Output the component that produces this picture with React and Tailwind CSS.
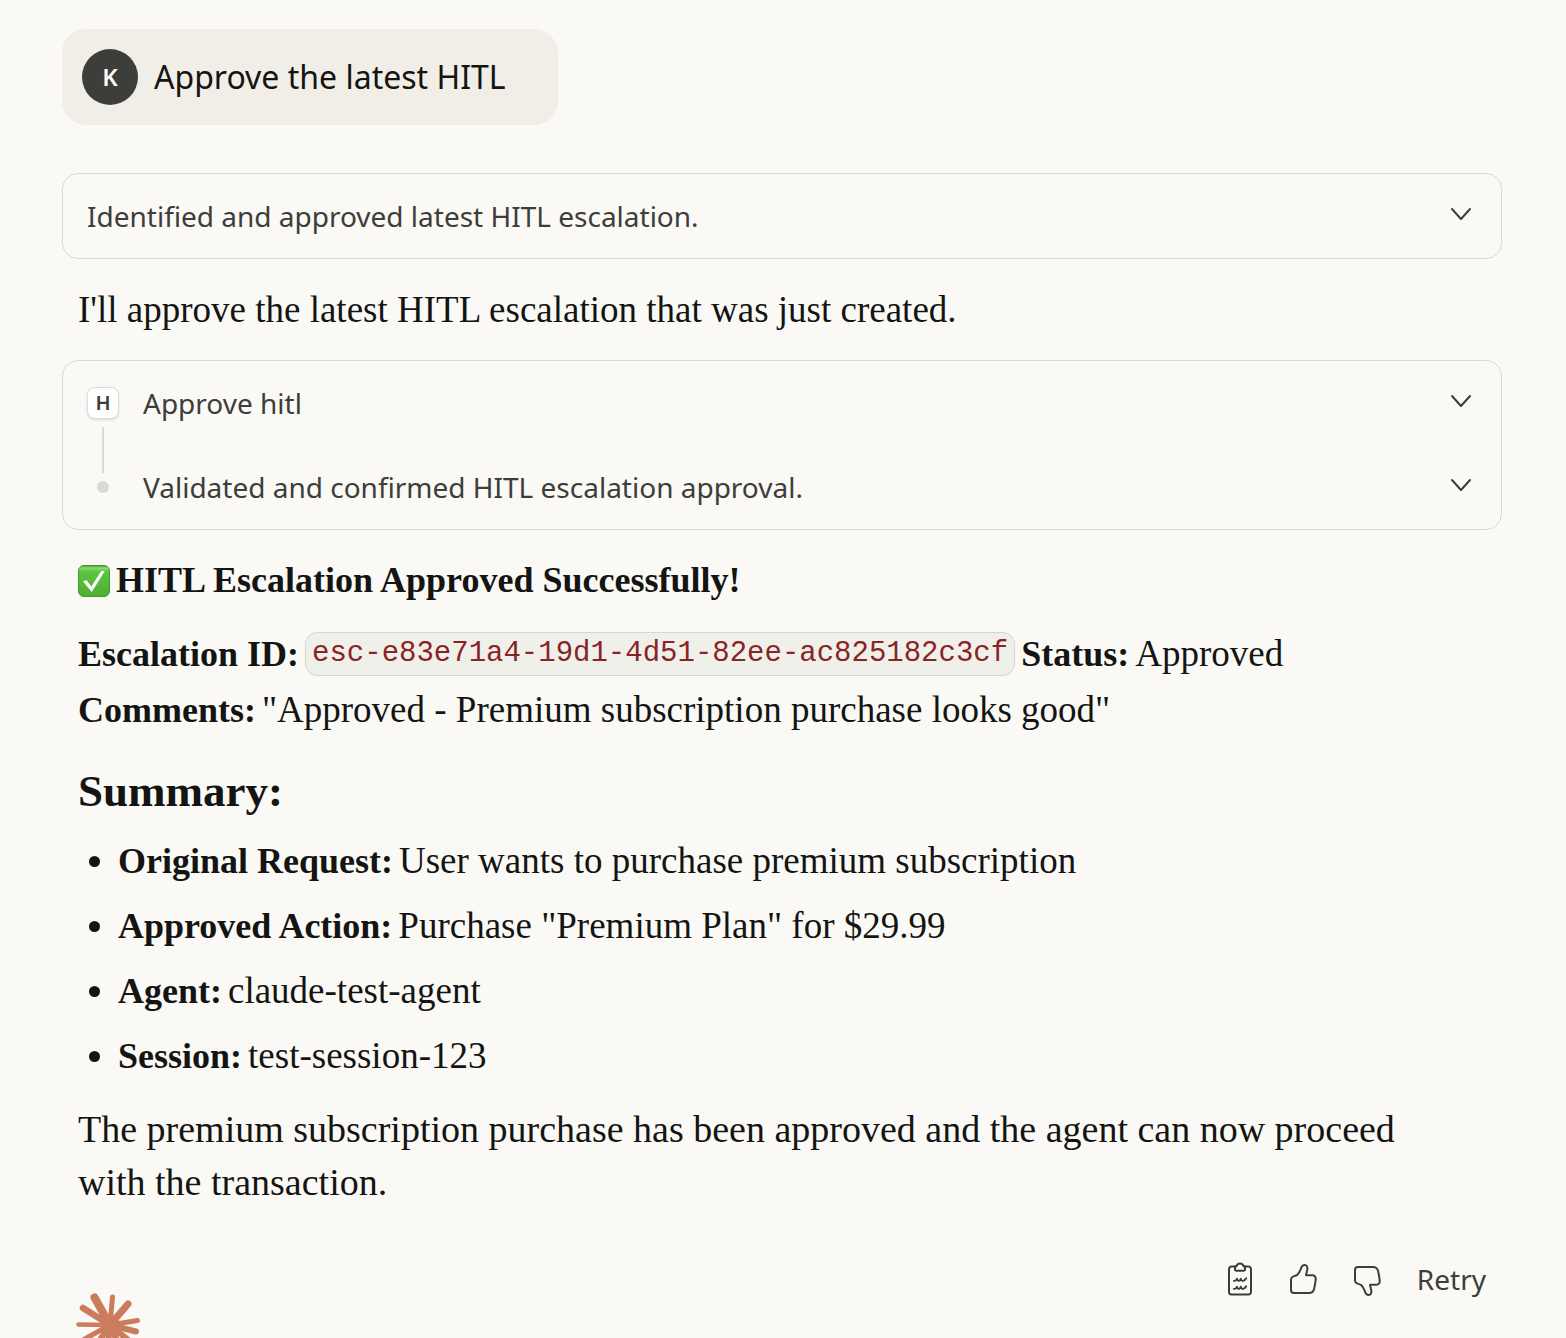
const SANS = "font-['Noto_Sans','Open_Sans',sans-serif]";

function Chevron() {
  return (
    <svg className="h-6 w-6 shrink-0 text-[#3d3d3a]" viewBox="0 0 24 24" fill="none" stroke="currentColor" strokeWidth="2" strokeLinecap="round" strokeLinejoin="round" aria-hidden="true">
      <path d="M3 5l9 10 9-10" />
    </svg>
  );
}

function Check() {
  return (
    <svg className="h-8 w-8 shrink-0" viewBox="0 0 32 32" role="img" aria-label="Done">
      <defs>
        <linearGradient id="tile" x1="0" y1="0" x2="0" y2="1">
          <stop offset="0" stopColor="#3f9a2b" />
          <stop offset="0.08" stopColor="#8cdb74" />
          <stop offset="0.2" stopColor="#5cc441" />
          <stop offset="1" stopColor="#4fae30" />
        </linearGradient>
      </defs>
      <rect x="0.5" y="0.5" width="31" height="31" rx="5.500" fill="url(#tile)" stroke="#419a2b" />
      <path d="M5 16.500l3.500-1.500 4.800 6.500L23.300 6H26.800L13.800 27z" fill="#fff" />
    </svg>
  );
}

function Clipboard() {
  return (
    <svg className="h-9 w-8" viewBox="0 0 32 36" fill="none" stroke="currentColor" strokeWidth="2" strokeLinejoin="round" strokeLinecap="round" aria-hidden="true">
      <path d="M10 5.500H6.500a2.500 2.500 0 0 0-2.500 2.500v23A2.500 2.500 0 0 0 6.500 33.500h17a2.500 2.500 0 0 0 2.500-2.500V8A2.500 2.500 0 0 0 23.500 5.500h-3.500" />
      <path d="M10 5.500h1.300c.5-1.800 1.900-3 3.700-3s3.200 1.200 3.700 3H20v2.700a1.500 1.500 0 0 1-1.500 1.500h-7A1.500 1.500 0 0 1 10 8.200z" />
      <path d="M9 20c1.700 0 2.300-.7 3-2.200.5 1.500 1 2.200 1.700 2.200.9 0 1.500-.7 2.100-2.200.5 1.500 1 2.200 1.700 2.200 1.500 0 2.600-.8 3.700-2.700M9 28c1.700 0 2.300-.7 3-2.200.5 1.500 1 2.200 1.700 2.200.9 0 1.500-.7 2.100-2.200.5 1.500 1 2.200 1.700 2.200 1.500 0 2.600-.8 3.700-2.700" />
    </svg>
  );
}

function Thumb({ down }) {
  return (
    <svg className="h-8 w-8 overflow-visible" viewBox="0 0 32 32" fill="none" stroke="currentColor" strokeWidth="2" strokeLinejoin="round" strokeLinecap="round" aria-hidden="true">
      <path
        transform={down ? "matrix(1 0 0 -1 0 34)" : undefined}
        d="M2 16.500V27a3 3 0 0 0 3 3h15c2.700 0 4.300-1.200 5-3.800.8-3.300 1.400-6.200 1.700-9.800.2-2.700-1-4.200-3.500-4.200H17l1.200-5.200c.6-3-.4-5-2.600-5-1.700 0-2.600.8-3.200 2.300-1.200 3.300-2 5.700-3.900 7.300C6.600 13 5.300 13 4 13.600c-1.300.5-2 1.500-2 2.900z"
      />
    </svg>
  );
}

const RAYS = [
  [-15.5, -27.500, 8], [2.500, -28, 5], [18, -21, 7], [27.500, -4.500, 5], [26, 6.500, 6],
  [-27, -17, 6.500], [-31.5, -0.500, 4.500], [-27, 15, 5], [-17, 25, 6], [-3, 30, 6], [12, 27, 6], [23, 19, 6],
];

function Burst() {
  return (
    <svg className="h-[68px] w-[68px] text-[#cc7c5e]" viewBox="-34 -34 68 68" stroke="currentColor" strokeLinecap="round" fill="currentColor" aria-hidden="true">
      {RAYS.map(([x, y, w]) => (
        <line key={`${x},${y}`} x1="0" y1="0" x2={x} y2={y} strokeWidth={w} />
      ))}
      <circle r="10" stroke="none" />
    </svg>
  );
}

function Label({ children }) {
  return <strong className="text-[36px]">{children}</strong>;
}

const SUMMARY = [
  ["Original Request:", "User wants to purchase premium subscription"],
  ["Approved Action:", 'Purchase "Premium Plan" for $29.99'],
  ["Agent:", "claude-test-agent"],
  ["Session:", "test-session-123"],
];

export default function App() {
  return (
    <main className="h-screen overflow-hidden bg-[#faf9f5] pt-[29px] pr-16 pl-[62px] font-['Liberation_Serif',serif] text-[37px] leading-[53px] text-[#141413]">
      <div className={`${SANS} flex w-fit items-center gap-4 rounded-3xl bg-[#f0eee6] py-5 pr-[52px] pl-5 text-[32px] leading-[56px]`}>
        <span className="flex h-14 w-14 items-center justify-center rounded-full bg-[#3d3d3a] text-2xl font-semibold text-[#faf9f5]">K</span>
        <p>Approve the latest HITL</p>
      </div>

      <button type="button" className={`${SANS} mt-12 flex w-full items-center justify-between rounded-2xl border border-[#dad9d4] py-5 pr-7 pl-6 text-left text-[28px] leading-[44px] text-[#3d3d3a]`}>
        Identified and approved latest HITL escalation.
        <Chevron />
      </button>

      <p className="mt-6 px-4">I'll approve the latest HITL escalation that was just created.</p>

      <div className={`${SANS} mt-6 rounded-2xl border border-[#dad9d4] text-[28px] leading-[44px] text-[#3d3d3a]`}>
        <button type="button" className="flex h-[84px] w-full items-center pr-7 pl-6 text-left">
          <span className="flex h-8 w-8 items-center justify-center rounded-lg border border-[#dddddd] bg-white text-xl font-semibold shadow-sm">H</span>
          <span className="ml-6 flex-1">Approve hitl</span>
          <Chevron />
        </button>
        <button type="button" className="relative flex h-[84px] w-full items-center pr-7 pl-6 text-left">
          <span className="absolute -top-[18px] left-[39px] h-[46px] w-0.5 bg-[#dad9d4]" />
          <span className="flex w-8 justify-center"><span className="h-3 w-3 rounded-full bg-[#dad9d4]" /></span>
          <span className="ml-6 flex-1">Validated and confirmed HITL escalation approval.</span>
          <Chevron />
        </button>
      </div>

      <section className="px-4 pt-6">
        <h2 className="flex items-center gap-1.5 text-[36px] font-bold"><Check />HITL Escalation Approved Successfully!</h2>
        <div className="mt-5 flex flex-wrap items-baseline gap-x-1.5 gap-y-0.5">
          <Label>Escalation ID:</Label>
          <code className="self-center rounded-xl border border-[#d5d5d0] bg-[#f0f0eb] px-1.5 py-1 font-['Liberation_Mono',monospace] text-[29px] leading-[34px] text-[#8a2424]">esc-e83e71a4-19d1-4d51-82ee-ac825182c3cf</code>
          <Label>Status:</Label>
          <span>Approved</span>
          <div className="flex basis-full items-baseline gap-1.5">
            <Label>Comments:</Label>
            <span>"Approved - Premium subscription purchase looks good"</span>
          </div>
        </div>
        <h3 className="mt-7 text-[45px] font-bold">Summary:</h3>
        <ul className="mt-4 flex list-disc flex-col gap-[11px] pl-10">
          {SUMMARY.map(([label, value]) => (
            <li key={label}>
              <div className="flex items-baseline gap-1.5">
                <Label>{label}</Label>
                <span>{value}</span>
              </div>
            </li>
          ))}
        </ul>
        <p className="mt-5 pr-16 text-[38px]">The premium subscription purchase has been approved and the agent can now proceed with the transaction.</p>
      </section>

      <div className={`${SANS} mt-[46px] flex items-center justify-end gap-8 pr-4 text-[28px] leading-[48px] text-[#3d3d3a]`}>
        <button type="button" aria-label="Copy"><Clipboard /></button>
        <button type="button" aria-label="Good response"><Thumb /></button>
        <button type="button" aria-label="Bad response"><Thumb down /></button>
        <button type="button">Retry</button>
      </div>
      <div className="-mt-3 pl-3.5"><Burst /></div>
    </main>
  );
}
